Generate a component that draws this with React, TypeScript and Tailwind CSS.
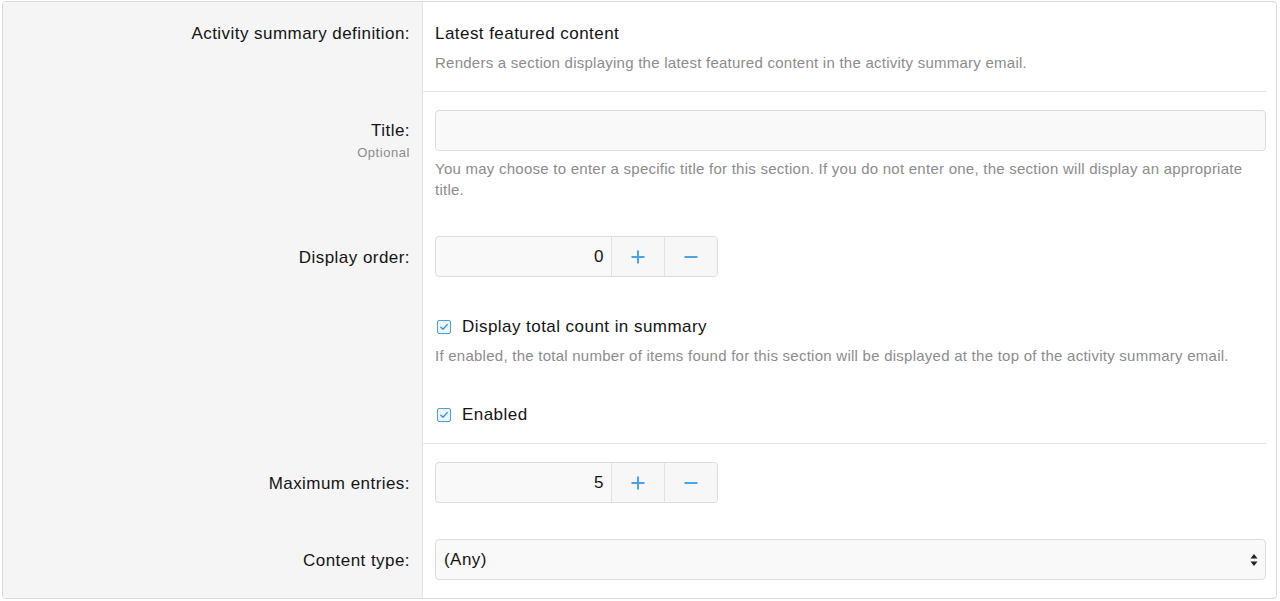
import React from "react";

const font = { fontFamily: '"Liberation Sans", Arial, sans-serif' };

function Label({ children, hint, pt }: { children?: React.ReactNode; hint?: string; pt: string }) {
  return (
    <div className={`w-[420px] shrink-0 bg-[#f5f5f5] border-r border-[#e3e3e3] pr-3 text-right ${pt}`}>
      {children && (
        <div className="text-[17px] leading-[24px] tracking-[0.45px] text-[#141414]">{children}</div>
      )}
      {hint && <div className="text-[13px] leading-[18px] tracking-[0.55px] text-[#8c8c8c] mt-[1px]">{hint}</div>}
    </div>
  );
}

function Desc({ children, mt = "mt-[6px]" }: { children: React.ReactNode; mt?: string }) {
  return <div className={`${mt} text-[15px] leading-[21px] tracking-[0.25px] text-[#8c8c8c]`}>{children}</div>;
}

function Checkbox() {
  return (
    <span className="ml-[2px] mt-[5px] flex h-[14px] w-[14px] shrink-0 items-center justify-center rounded-[2px] border border-[#4c9fe0] bg-[#eef6fd]">
      <svg width="10" height="10" viewBox="0 0 10 10" fill="none">
        <path d="M1.8 5.2 L4 7.3 L8.2 2.6" stroke="#3d8fd6" strokeWidth="1.4" strokeLinecap="round" strokeLinejoin="round" />
      </svg>
    </span>
  );
}

function NumberBox({ value }: { value: string }) {
  return (
    <div className="flex h-[41px] w-[283px] overflow-hidden rounded-[4px] border border-[#dcdcdc] bg-[#f9f9f9]">
      <div className="flex w-[176px] items-center justify-end pr-[8px] pt-[1px] text-[17px] text-[#141414]">{value}</div>
      <div className="flex w-[53px] items-center justify-center border-l border-[#e2e2e2] bg-[#f7f7f7]">
        <svg width="16" height="16" viewBox="0 0 16 16">
          <path d="M8 1.5 V14.5 M1.5 8 H14.5" stroke="#4aa3e8" strokeWidth="2" />
        </svg>
      </div>
      <div className="flex w-[53px] items-center justify-center border-l border-[#e2e2e2] bg-[#f7f7f7]">
        <svg width="16" height="16" viewBox="0 0 16 16">
          <path d="M1.5 8 H14.5" stroke="#4aa3e8" strokeWidth="2" />
        </svg>
      </div>
    </div>
  );
}

export default function App() {
  return (
    <div className="min-h-[601px] bg-white pt-[1px] pl-[2px]" style={font}>
      <div className="w-[1275px] overflow-hidden rounded-[4px] border border-[#d9d9d9]">
        {/* Row 1 */}
        <div className="flex">
          <Label pt="pt-[20px]">Activity summary definition:</Label>
          <div className="mr-[10px] flex-1 border-b border-[#e3e3e3] pl-3 pt-[20px] pb-[18px]">
            <div className="text-[17px] leading-[24px] tracking-[0.45px] text-[#141414]">Latest featured content</div>
            <Desc>Renders a section displaying the latest featured content in the activity summary email.</Desc>
          </div>
        </div>
        {/* Title */}
        <div className="flex">
          <Label pt="pt-[27px]" hint="Optional">Title:</Label>
          <div className="mr-[10px] flex-1 pl-3 pt-[18px] pb-[18px]">
            <div className="h-[41px] w-full rounded-[4px] border border-[#dcdcdc] bg-[#f9f9f9]" />
            <Desc mt="mt-[7px]">
              You may choose to enter a specific title for this section. If you do not enter one, the section will display an appropriate title.
            </Desc>
          </div>
        </div>
        {/* Display order */}
        <div className="flex">
          <Label pt="pt-[28px]">Display order:</Label>
          <div className="mr-[10px] flex-1 pl-3 pt-[18px] pb-[18px]">
            <NumberBox value="0" />
          </div>
        </div>
        {/* Display total count */}
        <div className="flex">
          <Label pt="pt-[20px]" />
          <div className="mr-[10px] flex-1 pl-3 pt-[20px] pb-[17px]">
            <div className="flex items-start gap-[11px]">
              <Checkbox />
              <span className="text-[17px] leading-[24px] tracking-[0.45px] text-[#141414]">Display total count in summary</span>
            </div>
            <Desc>If enabled, the total number of items found for this section will be displayed at the top of the activity summary email.</Desc>
          </div>
        </div>
        {/* Enabled */}
        <div className="flex">
          <Label pt="pt-[20px]" />
          <div className="mr-[10px] flex-1 border-b border-[#e3e3e3] pl-3 pt-[20px] pb-[16px]">
            <div className="flex items-start gap-[11px]">
              <Checkbox />
              <span className="text-[17px] leading-[24px] tracking-[0.45px] text-[#141414]">Enabled</span>
            </div>
          </div>
        </div>
        {/* Maximum entries */}
        <div className="flex">
          <Label pt="pt-[28px]">Maximum entries:</Label>
          <div className="mr-[10px] flex-1 pl-3 pt-[18px] pb-[18px]">
            <NumberBox value="5" />
          </div>
        </div>
        {/* Content type */}
        <div className="flex">
          <Label pt="pt-[28px]">Content type:</Label>
          <div className="mr-[10px] flex-1 pl-3 pt-[18px] pb-[18px]">
            <div className="flex h-[41px] w-full items-center justify-between rounded-[4px] border border-[#dcdcdc] bg-[#f9f9f9] pl-[8px] pr-[7px]">
              <span className="pt-[1px] text-[17px] tracking-[0.45px] text-[#141414]">(Any)</span>
              <svg width="8" height="14" viewBox="0 0 8 14">
                <path d="M4 1 L7.5 5.5 H0.5 Z M4 13 L7.5 8.5 H0.5 Z" fill="#222" />
              </svg>
            </div>
          </div>
        </div>
      </div>
    </div>
  );
}
